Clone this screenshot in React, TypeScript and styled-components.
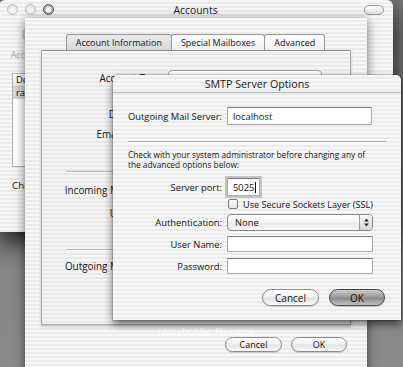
import React from 'react';
import styled, { createGlobalStyle } from 'styled-components';

const GlobalStyle = createGlobalStyle`
  html, body {
    margin: 0;
    padding: 0;
  }
  body {
    width: 403px;
    height: 367px;
    overflow: hidden;
    background: #868686;
    font-family: "Open Sans", "DejaVu Sans", sans-serif;
    color: #151515;
  }
`;

const pinstripe = `repeating-linear-gradient(to bottom, #f8f8f8 0px, #f8f8f8 2px, #ebebeb 2px, #ebebeb 4px)`;
const panelStripe = `repeating-linear-gradient(to bottom, #f5f5f5 0px, #f5f5f5 2px, #e8e8e8 2px, #e8e8e8 4px)`;

const Desktop = styled.div`
  position: relative;
  width: 403px;
  height: 367px;
  overflow: hidden;
  background: linear-gradient(to bottom, #777777 0%, #8a8a8a 100%);
`;

/* ---------- Accounts window (back) ---------- */

const AccountsWindow = styled.div`
  position: absolute;
  left: -1px;
  top: 0;
  width: 394px;
  height: 232px;
  background: ${pinstripe};
  border-radius: 6px 6px 0 0;
  box-shadow: 0 10px 26px rgba(0, 0, 0, 0.85);
  display: flex;
  flex-direction: column;
`;

const TitleBar = styled.div`
  height: 19px;
  display: grid;
  grid-template-columns: 1fr auto 1fr;
  align-items: center;
  padding: 0 9px 0 8px;
  flex-shrink: 0;
`;

const Lights = styled.div`
  display: flex;
  gap: 7px;
`;

const Light = styled.span<{ $dark?: boolean }>`
  width: 11px;
  height: 11px;
  box-sizing: border-box;
  border-radius: 50%;
  border: 1px solid ${(p) => (p.$dark ? '#4e4e4e' : '#bdbdbd')};
  background: radial-gradient(circle at 50% 70%, #ffffff 0%, #e2e2e2 75%);
  box-shadow: ${(p) => (p.$dark ? 'inset 0 0 0 1.5px #a8a8a8' : 'none')};
`;

const WindowTitle = styled.div<{ $size: number }>`
  font-size: ${(p) => p.$size}px;
  color: #1a1a1a;
  white-space: nowrap;
`;

const Pill = styled.span`
  justify-self: end;
  width: 18px;
  height: 8px;
  border: 1px solid #9a9a9a;
  border-radius: 5px;
  background: linear-gradient(#ffffff, #e0e0e0);
`;

const ToolItem = styled.div`
  display: flex;
  flex-direction: column;
  align-items: center;
  width: 34px;
  margin: 8px 0 0 13px;
  gap: 7px;
`;

const ToolIcon = styled.span`
  width: 15px;
  height: 15px;
  box-sizing: border-box;
  border-radius: 50%;
  border: 2px solid #c9c9c9;
  background: #dedede;
`;

const ToolLabel = styled.span`
  font-size: 8.5px;
  color: #a5a5a5;
`;

const ListBox = styled.div`
  margin: 13px 0 0 13px;
  width: 150px;
  height: 92px;
  border: 1px solid #b0b0b0;
  background: #ffffff;
  font-size: 9.4px;
`;

const ListHeader = styled.div`
  height: 12px;
  line-height: 12px;
  padding-left: 3px;
  background: linear-gradient(#ffffff, #e8e8e8);
  border-bottom: 1px solid #c6c6c6;
`;

const ListRow = styled.div`
  height: 12px;
  line-height: 12px;
  padding-left: 3px;
  background: #d4d4d4;
`;

const CheckCaption = styled.div`
  margin: 12px 0 0 13px;
  font-size: 9.8px;
`;

/* ---------- Account sheet (middle) ---------- */

const SheetWindow = styled.div`
  position: absolute;
  left: 25px;
  top: 18px;
  width: 342px;
  height: 370px;
  background: ${pinstripe};
  box-shadow: 0 2px 10px rgba(0, 0, 0, 0.55);
  display: flex;
  flex-direction: column;
  padding-top: 16px;
  box-sizing: border-box;
`;

const TabRow = styled.div`
  display: flex;
  justify-content: center;
  height: 16px;
`;

const Tab = styled.div<{ $active?: boolean }>`
  height: 16px;
  box-sizing: border-box;
  padding: 0 9px;
  margin-left: -1px;
  display: flex;
  align-items: center;
  font-size: 9px;
  border: 1px solid #969696;
  border-bottom: none;
  border-radius: 3px 3px 0 0;
  background: ${(p) =>
    p.$active ? 'linear-gradient(#ebebeb, #d9d9d9)' : 'linear-gradient(#ffffff, #f0f0f0)'};
`;

const TabPanel = styled.div`
  margin: 0 16px;
  height: 275px;
  box-sizing: border-box;
  border: 1px solid #a9a9a9;
  border-top-color: #8d8d8d;
  background: ${panelStripe};
  box-shadow: 0 2px 3px rgba(0, 0, 0, 0.18);
  padding-top: 17px;
`;

const InfoRow = styled.div<{ $mt?: number }>`
  display: grid;
  grid-template-columns: 122px 1fr;
  column-gap: 4px;
  align-items: center;
  height: 20px;
  margin-top: ${(p) => p.$mt ?? 0}px;
`;

const InfoLabel = styled.span`
  justify-self: end;
  white-space: nowrap;
  font-size: 9.9px;
`;

const InfoPopup = styled.span`
  width: 154px;
  height: 16px;
  box-sizing: border-box;
  border: 1px solid #a0a0a0;
  border-radius: 4px;
  background: linear-gradient(#ffffff, #eeeeee);
`;

const InfoRule = styled.div<{ $mt: number }>`
  margin: ${(p) => p.$mt}px 24px 0 24px;
  height: 0;
  border-top: 1px solid #b4b4b4;
  border-bottom: 1px solid #ffffff;
`;

const FaintName = styled.div`
  margin: 2px 0 0 133px;
  height: 10px;
  line-height: 10px;
  font-size: 9.5px;
  font-weight: 600;
  color: rgba(255, 255, 255, 0.9);
`;

const ButtonRow = styled.div<{ $gap: number; $mt: number; $pr: number }>`
  display: flex;
  justify-content: flex-end;
  gap: ${(p) => p.$gap}px;
  margin-top: ${(p) => p.$mt}px;
  padding-right: ${(p) => p.$pr}px;
`;

const PillButton = styled.button<{ $w: number; $h: number; $fs: number; $default?: boolean }>`
  width: ${(p) => p.$w}px;
  height: ${(p) => p.$h}px;
  box-sizing: border-box;
  padding: 0;
  border-radius: ${(p) => p.$h / 2}px;
  border: 1px solid ${(p) => (p.$default ? '#454545' : '#8c8c8c')};
  background: ${(p) =>
    p.$default
      ? 'linear-gradient(#cccccc 0%, #9d9d9d 45%, #8b8b8b 55%, #c2c2c2 100%)'
      : 'linear-gradient(#ffffff 0%, #f2f2f2 45%, #e3e3e3 55%, #fbfbfb 100%)'};
  font-family: inherit;
  font-size: ${(p) => p.$fs}px;
  color: #121212;
  box-shadow: 0 1px 1px rgba(0, 0, 0, 0.15);
`;

/* ---------- SMTP window (front) ---------- */

const SmtpWindow = styled.div`
  position: absolute;
  left: 113px;
  top: 75px;
  width: 288px;
  height: 245px;
  background: ${pinstripe};
  border-radius: 5px 5px 0 0;
  box-shadow: 0 4px 9px rgba(0, 0, 0, 0.6), 0 0 0 1px rgba(0, 0, 0, 0.12);
  display: flex;
  flex-direction: column;
`;

const SmtpTitle = styled.div`
  height: 18px;
  flex-shrink: 0;
  box-sizing: border-box;
  display: flex;
  align-items: center;
  justify-content: center;
  border-bottom: 1px solid #b7b7b7;
`;

const SmtpBody = styled.div`
  padding: 14px 15px 0 15px;
  display: flex;
  flex-direction: column;
`;

const FormRow = styled.div<{ $mt?: number }>`
  display: grid;
  grid-template-columns: 94px 1fr;
  column-gap: 5px;
  align-items: center;
  margin-top: ${(p) => p.$mt ?? 0}px;
`;

const FormLabel = styled.span`
  justify-self: end;
  white-space: nowrap;
  font-size: 9.4px;
`;

const TextField = styled.div<{ $w: number; $h: number; $focus?: boolean }>`
  width: ${(p) => p.$w}px;
  height: ${(p) => p.$h}px;
  box-sizing: border-box;
  border: 1px solid #acacac;
  border-top-color: #7e7e7e;
  background: #ffffff;
  font-size: 9.4px;
  padding-left: 5px;
  display: flex;
  align-items: center;
  box-shadow: ${(p) => (p.$focus ? '0 0 0 2px #c4c4c4' : 'none')};
`;

const Caret = styled.span`
  display: inline-block;
  width: 1px;
  height: 11px;
  background: #000;
  margin-left: 1px;
`;

const Rule = styled.div<{ $mt: number }>`
  margin-top: ${(p) => p.$mt}px;
  height: 0;
  border-top: 1px solid #a8a8a8;
  border-bottom: 1px solid #ffffff;
`;

const Note = styled.p`
  margin: 7px 0 0 0;
  font-size: 8.3px;
  line-height: 10px;
`;

const CheckLine = styled.label`
  display: flex;
  align-items: center;
  gap: 5px;
  height: 10px;
  padding-left: 1px;
  font-size: 9.1px;
  white-space: nowrap;
`;

const CheckBox = styled.span`
  width: 10px;
  height: 10px;
  box-sizing: border-box;
  border: 1px solid #7d7d7d;
  border-radius: 2px;
  background: linear-gradient(#fdfdfd, #e6e6e6);
`;

const Popup = styled.div`
  width: 146px;
  height: 17px;
  box-sizing: border-box;
  border: 1px solid #888888;
  border-radius: 4px;
  background: linear-gradient(#ffffff 0%, #f3f3f3 50%, #e6e6e6 52%, #f8f8f8 100%);
  display: flex;
  align-items: center;
  font-size: 9.4px;
`;

const PopupText = styled.span`
  flex: 1;
  padding-left: 7px;
`;

const PopupArrows = styled.span`
  width: 13px;
  height: 100%;
  box-sizing: border-box;
  border-left: 1px solid #9d9d9d;
  border-radius: 0 3px 3px 0;
  background: linear-gradient(#f6f6f6, #d6d6d6);
  display: flex;
  align-items: center;
  justify-content: center;
`;

const Arrows = () => (
  <svg width="5" height="9" viewBox="0 0 5 9">
    <path d="M2.5 0.5 L4.8 3.5 L0.2 3.5 Z" fill="#222" />
    <path d="M2.5 8.5 L4.8 5.5 L0.2 5.5 Z" fill="#222" />
  </svg>
);

const App: React.FC = () => {
  return (
    <>
      <GlobalStyle />
      <Desktop>
        <AccountsWindow>
          <TitleBar>
            <Lights>
              <Light />
              <Light />
              <Light $dark />
            </Lights>
            <WindowTitle $size={10.4}>Accounts</WindowTitle>
            <Pill />
          </TitleBar>
          <ToolItem>
            <ToolIcon />
            <ToolLabel>Accounts</ToolLabel>
          </ToolItem>
          <ListBox>
            <ListHeader>Description</ListHeader>
            <ListRow>rachel</ListRow>
          </ListBox>
          <CheckCaption>Check for new mail</CheckCaption>
        </AccountsWindow>

        <SheetWindow>
          <TabRow>
            <Tab $active>Account Information</Tab>
            <Tab>Special Mailboxes</Tab>
            <Tab>Advanced</Tab>
          </TabRow>
          <TabPanel>
            <InfoRow>
              <InfoLabel>Account Type:</InfoLabel>
              <InfoPopup />
            </InfoRow>
            <InfoRow $mt={16}>
              <InfoLabel>Description:</InfoLabel>
            </InfoRow>
            <InfoRow>
              <InfoLabel>Email Address:</InfoLabel>
            </InfoRow>
            <InfoRow>
              <InfoLabel>Full Name:</InfoLabel>
            </InfoRow>
            <InfoRule $mt={7} />
            <InfoRow $mt={7}>
              <InfoLabel>Incoming Mail Server:</InfoLabel>
            </InfoRow>
            <InfoRow $mt={3}>
              <InfoLabel>User Name:</InfoLabel>
            </InfoRow>
            <InfoRow>
              <InfoLabel>Password:</InfoLabel>
            </InfoRow>
            <InfoRule $mt={6} />
            <InfoRow $mt={5}>
              <InfoLabel>Outgoing Mail Server:</InfoLabel>
            </InfoRow>
          </TabPanel>
          <FaintName>placeholder filename</FaintName>
          <ButtonRow $gap={9} $mt={0} $pr={20}>
            <PillButton $w={57} $h={15} $fs={9}>Cancel</PillButton>
            <PillButton $w={56} $h={15} $fs={9}>OK</PillButton>
          </ButtonRow>
        </SheetWindow>

        <SmtpWindow>
          <SmtpTitle>
            <WindowTitle $size={10.7}>SMTP Server Options</WindowTitle>
          </SmtpTitle>
          <SmtpBody>
            <FormRow>
              <FormLabel>Outgoing Mail Server:</FormLabel>
              <TextField $w={145} $h={18}>localhost</TextField>
            </FormRow>
            <Rule $mt={16} />
            <Note>
              Check with your system administrator before changing any of
              <br />
              the advanced options below:
            </Note>
            <FormRow $mt={8}>
              <FormLabel>Server port:</FormLabel>
              <TextField $w={33} $h={18} $focus>
                5025
                <Caret />
              </TextField>
            </FormRow>
            <FormRow $mt={3}>
              <span />
              <CheckLine>
                <CheckBox />
                Use Secure Sockets Layer (SSL)
              </CheckLine>
            </FormRow>
            <FormRow $mt={5}>
              <FormLabel>Authentication:</FormLabel>
              <Popup>
                <PopupText>None</PopupText>
                <PopupArrows>
                  <Arrows />
                </PopupArrows>
              </Popup>
            </FormRow>
            <FormRow $mt={5}>
              <FormLabel>User Name:</FormLabel>
              <TextField $w={146} $h={16} />
            </FormRow>
            <FormRow $mt={6}>
              <FormLabel>Password:</FormLabel>
              <TextField $w={146} $h={16} />
            </FormRow>
            <ButtonRow $gap={10} $mt={15} $pr={1}>
              <PillButton $w={57} $h={17} $fs={10}>Cancel</PillButton>
              <PillButton $w={56} $h={17} $fs={10} $default>OK</PillButton>
            </ButtonRow>
          </SmtpBody>
        </SmtpWindow>
      </Desktop>
    </>
  );
};

export default App;
